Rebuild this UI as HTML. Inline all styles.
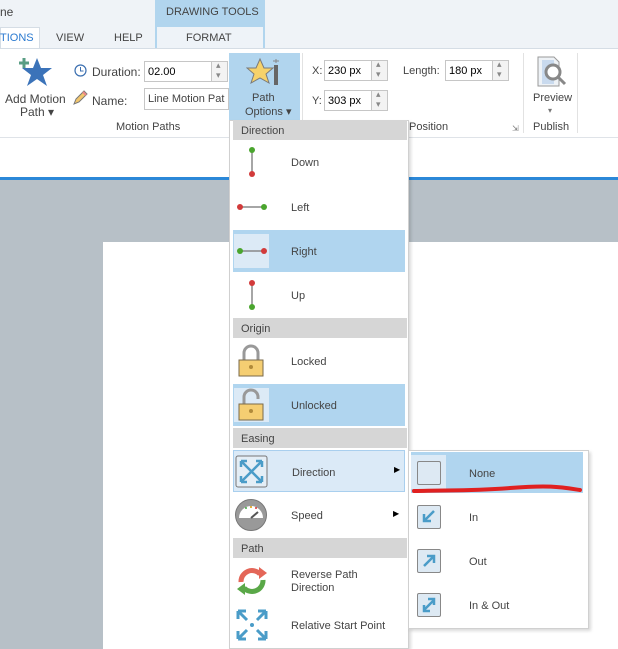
<!DOCTYPE html>
<html><head><meta charset="utf-8"><style>
*{margin:0;padding:0;box-sizing:border-box}
body{width:618px;height:649px;overflow:hidden;position:relative;background:#fff;font-family:"Liberation Sans",sans-serif;font-size:11px;color:#444}
.a{position:absolute}
.hdr{position:absolute;left:233px;width:174px;height:20px;background:#d6d6d6;padding:5px 0 0 8px;font-size:11px;color:#444}
.it{position:absolute;left:233px;width:172px;height:42px}
.it span{position:absolute;left:58px;top:16px}
.hl{background:#b0d5ef}
.sq{position:absolute;left:0;top:0;width:35px;height:34px;background:#dceaf6}
.inp{position:absolute;background:#fff;border:1px solid #c6c6c6;height:21px;padding:4px 3px;font-size:11px;color:#000}
.spin{position:absolute;border:1px solid #c6c6c6;background:#f3f3f3;width:17px;height:21px}
.spin:before{content:"▴";position:absolute;left:4px;top:-2px;font-size:9px;color:#888}
.spin:after{content:"▾";position:absolute;left:4px;top:8px;font-size:9px;color:#888}
.sbx{position:absolute;left:7px;width:24px;height:24px;border:1px solid #888;background:#dde9f3;border-radius:2px}
</style></head><body>
<div class="a" style="left:0;top:0;width:618px;height:48px;background:#eff3f7"></div>
<div class="a" style="left:0;top:5px;font-size:12px">ne</div>
<div class="a" style="left:155px;top:0;width:110px;height:48px;background:#b1d5ee"></div>
<div class="a" style="left:166px;top:6px;font-size:11px;color:#444">DRAWING TOOLS</div>
<div class="a" style="left:157px;top:27px;width:106px;height:21px;background:#eef3f8"></div>
<div class="a" style="left:186px;top:32px">FORMAT</div>
<div class="a" style="left:0;top:27px;width:40px;height:22px;background:#fff;border:1px solid #d5dde5;border-bottom:none"></div>
<div class="a" style="left:0;top:32px;color:#2b7ad0">TIONS</div>
<div class="a" style="left:56px;top:32px">VIEW</div>
<div class="a" style="left:114px;top:32px">HELP</div>
<div class="a" style="left:0;top:48px;width:618px;height:1px;background:#d5dde5"></div>
<div class="a" style="left:0;top:137px;width:618px;height:1px;background:#dfe3e8"></div>
<div class="a" style="left:0;top:177px;width:618px;height:3px;background:#2b88d8"></div>
<div class="a" style="left:0;top:180px;width:618px;height:469px;background:#b7c0c7"></div>
<div class="a" style="left:103px;top:242px;width:515px;height:407px;background:#fff"></div>
<svg class="a" style="left:18px;top:56px" width="36" height="32"><polygon points="19,2 23,12 34,12 25,19 29,30 19,23 9,30 13,19 4,12 15,12" fill="#3b73b9"/><path d="M6 2v10M1 7h10" stroke="#5a9e84" stroke-width="3"/></svg>
<div class="a" style="left:5px;top:92px;font-size:12px">Add Motion</div>
<div class="a" style="left:20px;top:105px;font-size:12px">Path ▾</div>
<svg class="a" style="left:74px;top:64px" width="13" height="13"><circle cx="6.5" cy="6.5" r="5.5" fill="none" stroke="#3b6fb0" stroke-width="1.2"/><path d="M6.5 3v4h3" stroke="#3b6fb0" fill="none"/></svg>
<div class="a" style="left:92px;top:65px;font-size:12px">Duration:</div>
<div class="inp" style="left:144px;top:61px;width:68px">02.00</div><div class="spin" style="left:211px;top:61px"></div>
<svg class="a" style="left:72px;top:90px" width="16" height="16"><path d="M2 14l2-5 8-8 3 3-8 8z" fill="#f2c66d" stroke="#777"/><path d="M11 2l3 3" stroke="#e88" stroke-width="2"/></svg>
<div class="a" style="left:92px;top:94px;font-size:12px">Name:</div>
<div class="inp" style="left:144px;top:88px;width:85px;height:22px;color:#444;overflow:hidden;white-space:nowrap">Line Motion Pat</div>
<div class="a" style="left:116px;top:121px;font-size:11px">Motion Paths</div>
<div class="a" style="left:229px;top:53px;width:71px;height:68px;background:#b1d5ee"></div>
<svg class="a" style="left:246px;top:57px" width="36" height="30"><polygon points="14,2 18,11 27,11 20,17 23,26 14,21 5,26 8,17 1,11 10,11" fill="#f6d26a" stroke="#7a7a7a"/><rect x="28" y="8" width="4" height="20" fill="#666"/><path d="M30 2v4M27 4h6" stroke="#888"/></svg>
<div class="a" style="left:252px;top:92px;font-size:11px">Path</div>
<div class="a" style="left:245px;top:105px;font-size:11px">Options ▾</div>
<div class="a" style="left:302px;top:53px;width:1px;height:80px;background:#e2e2e2"></div>
<div class="a" style="left:312px;top:65px">X:</div>
<div class="inp" style="left:324px;top:60px;width:48px">230 px</div><div class="spin" style="left:371px;top:60px"></div>
<div class="a" style="left:312px;top:95px">Y:</div>
<div class="inp" style="left:324px;top:90px;width:48px">303 px</div><div class="spin" style="left:371px;top:90px"></div>
<div class="a" style="left:403px;top:65px">Length:</div>
<div class="inp" style="left:445px;top:60px;width:48px">180 px</div><div class="spin" style="left:492px;top:60px"></div>
<div class="a" style="left:409px;top:121px">Position</div>
<div class="a" style="left:512px;top:124px;font-size:8px;color:#777">⇲</div>
<div class="a" style="left:523px;top:53px;width:1px;height:80px;background:#e2e2e2"></div>
<div class="a" style="left:577px;top:53px;width:1px;height:80px;background:#e2e2e2"></div>
<svg class="a" style="left:535px;top:55px" width="34" height="35"><path d="M3 2h16l5 5v24H3z" fill="#eef2f6" stroke="#999"/><rect x="7" y="5" width="12" height="24" fill="#c9daee"/><circle cx="18" cy="17" r="7" fill="#fff" stroke="#888" stroke-width="3"/><path d="M23 22l7 7" stroke="#888" stroke-width="3"/></svg>
<div class="a" style="left:533px;top:92px">Preview</div>
<div class="a" style="left:548px;top:106px;font-size:8px;color:#777">▾</div>
<div class="a" style="left:533px;top:121px">Publish</div>
<div class="a" style="left:229px;top:120px;width:180px;height:529px;background:#fff;border:1px solid #d0d0d0;box-shadow:2px 2px 3px rgba(0,0,0,.15)"></div>
<div class="hdr" style="top:120px">Direction</div>
<div class="it" style="top:141px"><svg class="a" style="left:12px;top:4px" width="14" height="34"><path d="M7 5v24" stroke="#888" stroke-width="1.5"/><circle cx="7" cy="5" r="3" fill="#4aa52e"/><circle cx="7" cy="29" r="3" fill="#d23a3a"/></svg><span>Down</span></div>
<div class="it" style="top:186px"><svg class="a" style="left:2px;top:14px" width="34" height="14"><path d="M5 7h24" stroke="#888" stroke-width="1.5"/><circle cx="5" cy="7" r="3" fill="#d23a3a"/><circle cx="29" cy="7" r="3" fill="#4aa52e"/></svg><span>Left</span></div>
<div class="it hl" style="top:230px"><div class="sq" style="left:1px;top:4px"></div><svg class="a" style="left:2px;top:14px" width="34" height="14"><path d="M5 7h24" stroke="#888" stroke-width="1.5"/><circle cx="5" cy="7" r="3" fill="#4aa52e"/><circle cx="29" cy="7" r="3" fill="#d23a3a"/></svg><span>Right</span></div>
<div class="it" style="top:274px"><svg class="a" style="left:12px;top:4px" width="14" height="34"><path d="M7 5v24" stroke="#888" stroke-width="1.5"/><circle cx="7" cy="5" r="3" fill="#d23a3a"/><circle cx="7" cy="29" r="3" fill="#4aa52e"/></svg><span>Up</span></div>
<div class="hdr" style="top:318px">Origin</div>
<div class="it" style="top:340px"><svg class="a" style="left:5px;top:4px" width="26" height="34"><path d="M6 16V9a7 7 0 0 1 14 0v7" fill="none" stroke="#999" stroke-width="3"/><rect x="1" y="16" width="24" height="16" fill="#f5ce72" stroke="#7a6a4a"/><circle cx="13" cy="23" r="2" fill="#b08a3a"/></svg><span>Locked</span></div>
<div class="it hl" style="top:384px"><div class="sq" style="left:1px;top:4px"></div><svg class="a" style="left:5px;top:4px" width="26" height="34"><path d="M6 16V9a7 7 0 0 1 14 0v2" fill="none" stroke="#999" stroke-width="3"/><rect x="1" y="16" width="24" height="16" fill="#f5ce72" stroke="#7a6a4a"/><circle cx="13" cy="23" r="2" fill="#b08a3a"/></svg><span>Unlocked</span></div>
<div class="hdr" style="top:428px">Easing</div>
<div class="it" style="top:450px;background:#dbeaf7;border:1px solid #a9cfee"><svg class="a" style="left:1px;top:4px" width="33" height="33"><rect x="1" y="1" width="31" height="31" rx="2" fill="#e4eef6" stroke="#777"/><path d="M6 6l21 21M27 6L6 27M6 6h6M6 6v6M27 6h-6M27 6v6M6 27h6M6 27v-6M27 27h-6M27 27v-6" stroke="#4a9cc8" stroke-width="2.5" fill="none"/></svg><span>Direction</span><div class="a" style="left:160px;top:14px;font-size:8px;color:#000">▶</div></div>
<div class="it" style="top:494px"><svg class="a" style="left:1px;top:4px" width="34" height="34"><circle cx="17" cy="17" r="15.5" fill="#999" stroke="#777"/><path d="M5 20a12 12 0 0 1 24 0z" fill="#fff"/><path d="M17 20l7-6" stroke="#555" stroke-width="2"/><circle cx="12" cy="10" r="1" fill="#4a4"/><circle cx="17" cy="9" r="1" fill="#d90"/><circle cx="22" cy="10" r="1" fill="#d33"/></svg><span>Speed</span><div class="a" style="left:160px;top:15px;font-size:8px;color:#000">▶</div></div>
<div class="hdr" style="top:538px">Path</div>
<div class="it" style="top:560px"><svg class="a" style="left:2px;top:4px" width="34" height="34"><path d="M6 18a11 11 0 0 1 19-8" fill="none" stroke="#e46658" stroke-width="5"/><path d="M24 3l8 6-8 6z" fill="#e46658"/><path d="M28 16a11 11 0 0 1-19 8" fill="none" stroke="#5aa848" stroke-width="5"/><path d="M10 31l-8-6 8-6z" fill="#5aa848"/></svg><span style="top:9px;line-height:13px">Reverse Path<br>Direction</span></div>
<div class="it" style="top:604px"><svg class="a" style="left:2px;top:4px" width="34" height="34"><circle cx="17" cy="17" r="2" fill="#4a9cc8"/><path d="M3 3l9 9M31 3l-9 9M3 31l9-9M31 31l-9-9M3 3h8M3 3v8M31 3h-8M31 3v8M3 31h8M3 31v-8M31 31h-8M31 31v-8" stroke="#4a9cc8" stroke-width="3" fill="none"/></svg><span>Relative Start Point</span></div>
<div class="a" style="left:408px;top:450px;width:181px;height:179px;background:#fff;border:1px solid #d0d0d0;box-shadow:2px 2px 3px rgba(0,0,0,.15)"></div>
<div class="a hl" style="left:411px;top:452px;width:172px;height:41px"></div>
<div class="a" style="left:411px;top:455px;width:35px;height:34px;background:#dceaf6"></div>
<div class="sbx" style="left:417px;top:461px"></div>
<div class="a" style="left:469px;top:468px">None</div>
<svg class="a" style="left:410px;top:484px" width="175" height="12"><path d="M4 7C40 6 60 7 100 4S150 3 170 6" stroke="#e02020" stroke-width="4" fill="none" stroke-linecap="round"/></svg>
<div class="sbx" style="left:417px;top:505px"><svg width="22" height="22"><path d="M16 5L6 15M6 8v7h7" stroke="#4a9cc8" stroke-width="2.5" fill="none"/></svg></div>
<div class="a" style="left:469px;top:512px">In</div>
<div class="sbx" style="left:417px;top:549px"><svg width="22" height="22"><path d="M6 16L16 6M9 6h7v7" stroke="#4a9cc8" stroke-width="2.5" fill="none"/></svg></div>
<div class="a" style="left:469px;top:556px">Out</div>
<div class="sbx" style="left:417px;top:593px"><svg width="22" height="22"><path d="M6 16L16 6M10 5h6v6M6 11v6h6" stroke="#4a9cc8" stroke-width="2.5" fill="none"/></svg></div>
<div class="a" style="left:469px;top:600px">In &amp; Out</div>
</body></html>
